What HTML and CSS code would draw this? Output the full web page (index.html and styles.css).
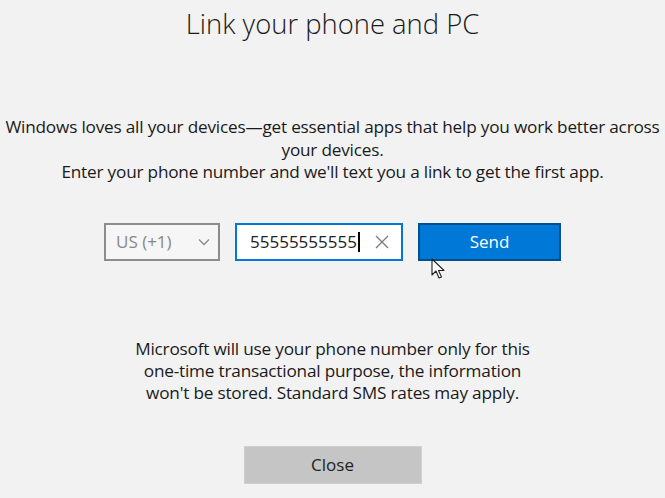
FILE: index.html
```html
<!DOCTYPE html>
<html>
<head>
  <meta charset="utf-8">
  <title>Link your phone and PC</title>
  <link rel="stylesheet" href="styles.css">
</head>
<body class="body">
  <div id="dialog">
    <h1 class="title">Link your phone and PC</h1>
    <p class="intro">Windows loves all your devices—get essential apps that help you work better across your devices.<br>Enter your phone number and we'll text you a link to get the first app.</p>
    <div class="row">
      <div class="select">
        <span>US (+1)</span>
        <svg class="chevron" width="12" height="8" viewBox="0 0 12 8"><path d="M1 1.5 L6 6.5 L11 1.5" fill="none" stroke="#8a8a8a" stroke-width="1.3"/></svg>
      </div>
      <div class="phone">
        <span class="digits">55555555555</span><span class="caret"></span>
        <svg class="clear" width="14" height="14" viewBox="0 0 14 14"><path d="M1 1 L13 13 M13 1 L1 13" stroke="#7a7a7a" stroke-width="1.3"/></svg>
      </div>
      <div class="send">
        Send
        <svg class="pointer" width="16" height="22" viewBox="0 0 16 22"><path d="M1 1 L1 17 L5 13 L8 20 L10.5 19 L7.5 12.5 L13 12.5 Z" fill="#fff" stroke="#222" stroke-width="1.1" stroke-linejoin="round"/></svg>
      </div>
    </div>
    <p class="note">Microsoft will use your phone number only for this one-time transactional purpose, the information won't be stored. Standard SMS rates may apply.</p>
    <div class="close">Close</div>
  </div>
</body>
</html>
```

FILE: styles.css
```css
.body {
  margin: 0;
  background-color: #f2f2f2;
  font-family: "Segoe UI", "Open Sans", "Noto Sans", sans-serif;
  color: #1a1a1a;
}

#dialog {
  display: flex;
  flex-direction: column;
  align-items: center;
  width: 665px;
  height: 498px;
  overflow: hidden;
}

.title {
  margin: 4px 0 0 0;
  font-size: 27.4px;
  font-weight: 300;
  line-height: 40px;
  color: #1a1a1a;
}

.intro {
  margin: 72px 0 0 0;
  width: 665px;
  font-size: 17.2px;
  line-height: 22.5px;
  text-align: center;
  letter-spacing: -0.2px;
}

.row {
  display: flex;
  gap: 15px;
  margin-top: 39px;
  height: 38px;
}

.select {
  display: flex;
  align-items: center;
  justify-content: space-between;
  width: 116px;
  box-sizing: border-box;
  border: 2px solid #8c8c8c;
  background-color: #f6f6f6;
  padding: 0 8px 0 10px;
  font-size: 17px;
  color: #888;
}

.phone {
  display: flex;
  align-items: center;
  width: 168px;
  box-sizing: border-box;
  border: 2px solid #0078d7;
  background-color: #fff;
  padding: 0 12px 0 13px;
  font-size: 17px;
  color: #222;
}

.caret {
  width: 2px;
  height: 20px;
  background-color: #000;
  margin-left: 1px;
}

.clear {
  margin-left: auto;
}

.send {
  position: relative;
  display: flex;
  align-items: center;
  justify-content: center;
  width: 143px;
  box-sizing: border-box;
  border: 2px solid #004f8f;
  background-color: #0078d7;
  color: #fff;
  font-size: 17px;
}

.pointer {
  position: absolute;
  left: 11px;
  top: 33px;
}

.note {
  margin: 77px 0 0 0;
  width: 410px;
  font-size: 17.2px;
  line-height: 22px;
  text-align: center;
  letter-spacing: -0.2px;
}

.close {
  display: flex;
  align-items: center;
  justify-content: center;
  width: 178px;
  height: 38px;
  box-sizing: border-box;
  margin-top: 42px;
  border: 1px solid #cfcfcf;
  background-color: #c5c5c5;
  font-size: 17px;
  color: #222;
}
```
